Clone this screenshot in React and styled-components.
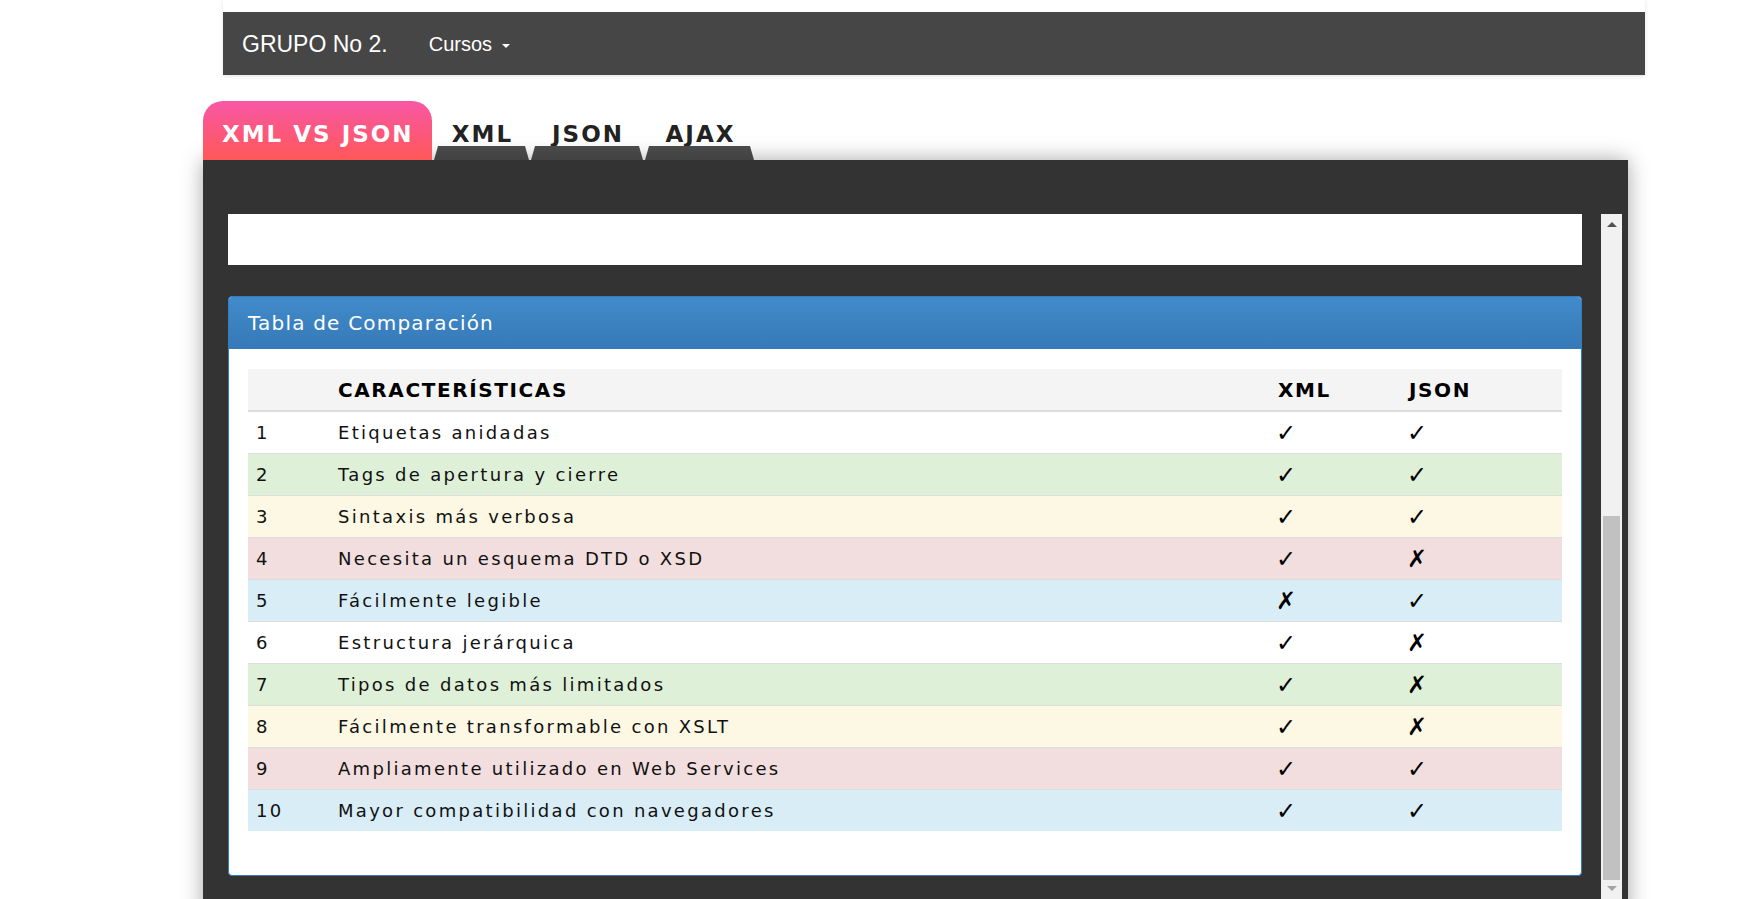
import React from 'react';
import styled, { createGlobalStyle } from 'styled-components';

const GlobalStyle = createGlobalStyle`
  html, body {
    margin: 0;
    padding: 0;
    background: #fff;
    overflow: hidden;
  }
  body {
    font-family: "DejaVu Sans", Verdana, sans-serif;
    color: #111;
  }
`;

const HeaderWrap = styled.header`
  margin-left: 223px;
  width: 1422px;
  padding-top: 12px;
  box-shadow: 0 1px 4px rgba(0, 0, 0, 0.12);
`;

const Navbar = styled.nav`
  height: 63px;
  box-sizing: border-box;
  background: #464646;
  display: flex;
  align-items: center;
  padding: 2px 19px 0;
  font-family: "Liberation Sans", Arial, sans-serif;
  color: #fff;
`;

const Brand = styled.span`
  font-size: 23px;
  margin-right: 41px;
`;

const NavItem = styled.span`
  font-size: 20px;
  display: flex;
  align-items: center;
  gap: 10px;
`;

const Caret = styled.span`
  width: 0;
  height: 0;
  border-left: 4px solid transparent;
  border-right: 4px solid transparent;
  border-top: 4px solid #fff;
  margin-top: 3px;
`;

const TabBar = styled.div`
  position: relative;
  z-index: 1;
  display: flex;
  align-items: flex-end;
  height: 59px;
  margin: 26px 0 0 203px;
  font-family: "DejaVu Sans", Verdana, sans-serif;
  font-weight: bold;
  font-size: 23px;
  letter-spacing: 2px;
`;

const ActiveTab = styled.div`
  width: 229px;
  height: 59px;
  box-sizing: border-box;
  padding: 7px 0 0 19px;
  display: flex;
  align-items: center;
  border-radius: 20px 20px 0 0;
  background: linear-gradient(to bottom, #f857a6, #ff5858);
  color: #fff;
  white-space: nowrap;
`;

const Tab = styled.div`
  width: ${({ w }) => w}px;
  display: flex;
  flex-direction: column;
  margin-left: 2px;
`;

const TabLabel = styled.span`
  height: 24px;
  line-height: 24px;
  padding-left: 2px;
  text-align: center;
  color: #222;
`;

const TabFoot = styled.span`
  height: 14px;
  background: linear-gradient(to bottom, #4a4a4a, #424242);
  clip-path: polygon(4px 0, calc(100% - 4px) 0, 100% 100%, 0 100%);
`;

const Panel = styled.section`
  margin-left: 203px;
  width: 1425px;
  height: 760px;
  box-sizing: border-box;
  background: #333;
  box-shadow: 0 0 20px rgba(0, 0, 0, 0.35);
  padding: 54px 6px 0 25px;
  display: flex;
  gap: 19px;
  overflow: hidden;
`;

const Content = styled.div`
  width: 1354px;
  flex-shrink: 0;
`;

const Blank = styled.div`
  height: 51px;
  background: #fff;
`;

const ScrollTrack = styled.div`
  width: 21px;
  flex-shrink: 0;
  background: #f1f1f1;
  display: flex;
  flex-direction: column;
  align-items: center;
`;

const ScrollArrow = styled.span`
  width: 0;
  height: 0;
  border-left: 5px solid transparent;
  border-right: 5px solid transparent;
  ${({ down }) =>
    down
      ? 'border-top: 5px solid #a3a3a3; margin-top: 6px;'
      : 'border-bottom: 5px solid #505050; margin: 8px 0;'}
`;

const Thumb = styled.div`
  width: 17px;
  background: #c1c1c1;
  height: 364px;
  margin-top: ${({ offset }) => offset}px;
`;

const Card = styled.div`
  margin-top: 31px;
  background: #fff;
  border: 1px solid #357ebd;
  border-radius: 4px;
  overflow: hidden;
`;

const CardHeader = styled.div`
  height: 52px;
  display: flex;
  align-items: center;
  padding: 0 19px;
  background: linear-gradient(to bottom, #428bca, #3579b8);
  color: #fff;
  font-size: 20px;
  letter-spacing: 1.2px;
`;

const CardBody = styled.div`
  padding: 20px 19px 44px;
`;

const Table = styled.table`
  width: 100%;
  border-collapse: collapse;
  table-layout: fixed;
  font-size: 18px;
  letter-spacing: 2.3px;
  color: #111;
`;

const Th = styled.th`
  height: 41px;
  padding: 0 8px;
  text-align: left;
  font-weight: bold;
  font-size: 20px;
  letter-spacing: 1.6px;
  color: #000;
  background: #f4f4f4;
  border-bottom: 2px solid #ddd;
`;

const tones = {
  plain: '#fff',
  success: '#dff0d8',
  warning: '#fcf8e3',
  danger: '#f2dede',
  info: '#d9edf7',
};

const Row = styled.tr`
  background: ${({ tone }) => tones[tone]};
`;

const Td = styled.td`
  height: 41px;
  padding: 0 8px;
  border-top: 1px solid #ddd;
  white-space: nowrap;
`;

const Mark = styled.span`
  display: inline-block;
  margin-left: -2px;
  color: #000;
  font-size: 24px;
  line-height: 1;
  letter-spacing: 0;
`;

const toneCycle = ['plain', 'success', 'warning', 'danger', 'info'];

const rows = [
  ['Etiquetas anidadas', true, true],
  ['Tags de apertura y cierre', true, true],
  ['Sintaxis más verbosa', true, true],
  ['Necesita un esquema DTD o XSD', true, false],
  ['Fácilmente legible', false, true],
  ['Estructura jerárquica', true, false],
  ['Tipos de datos más limitados', true, false],
  ['Fácilmente transformable con XSLT', true, false],
  ['Ampliamente utilizado en Web Services', true, true],
  ['Mayor compatibilidad con navegadores', true, true],
];

const tabs = [
  { label: 'XML', w: 95 },
  { label: 'JSON', w: 112 },
  { label: 'AJAX', w: 109 },
];

export default function App() {
  return (
    <>
      <GlobalStyle />
      <HeaderWrap>
        <Navbar>
          <Brand>GRUPO No 2.</Brand>
          <NavItem>
            Cursos <Caret />
          </NavItem>
        </Navbar>
      </HeaderWrap>

      <TabBar>
        <ActiveTab>XML VS JSON</ActiveTab>
        {tabs.map((t) => (
          <Tab key={t.label} w={t.w}>
            <TabLabel>{t.label}</TabLabel>
            <TabFoot />
          </Tab>
        ))}
      </TabBar>

      <Panel>
        <Content>
          <Blank />
          <Card>
            <CardHeader>Tabla de Comparación</CardHeader>
            <CardBody>
              <Table>
                <colgroup>
                  <col style={{ width: 82 }} />
                  <col style={{ width: 940 }} />
                  <col style={{ width: 131 }} />
                  <col />
                </colgroup>
                <thead>
                  <tr>
                    <Th />
                    <Th>CARACTERÍSTICAS</Th>
                    <Th>XML</Th>
                    <Th>JSON</Th>
                  </tr>
                </thead>
                <tbody>
                  {rows.map(([label, xml, json], i) => (
                    <Row key={label} tone={toneCycle[i % 5]}>
                      <Td>{i + 1}</Td>
                      <Td>{label}</Td>
                      <Td>
                        <Mark>{xml ? '✓' : '✗'}</Mark>
                      </Td>
                      <Td>
                        <Mark>{json ? '✓' : '✗'}</Mark>
                      </Td>
                    </Row>
                  ))}
                </tbody>
              </Table>
            </CardBody>
          </Card>
        </Content>
        <ScrollTrack>
          <ScrollArrow />
          <Thumb offset={281} />
          <ScrollArrow down />
        </ScrollTrack>
      </Panel>
    </>
  );
}
